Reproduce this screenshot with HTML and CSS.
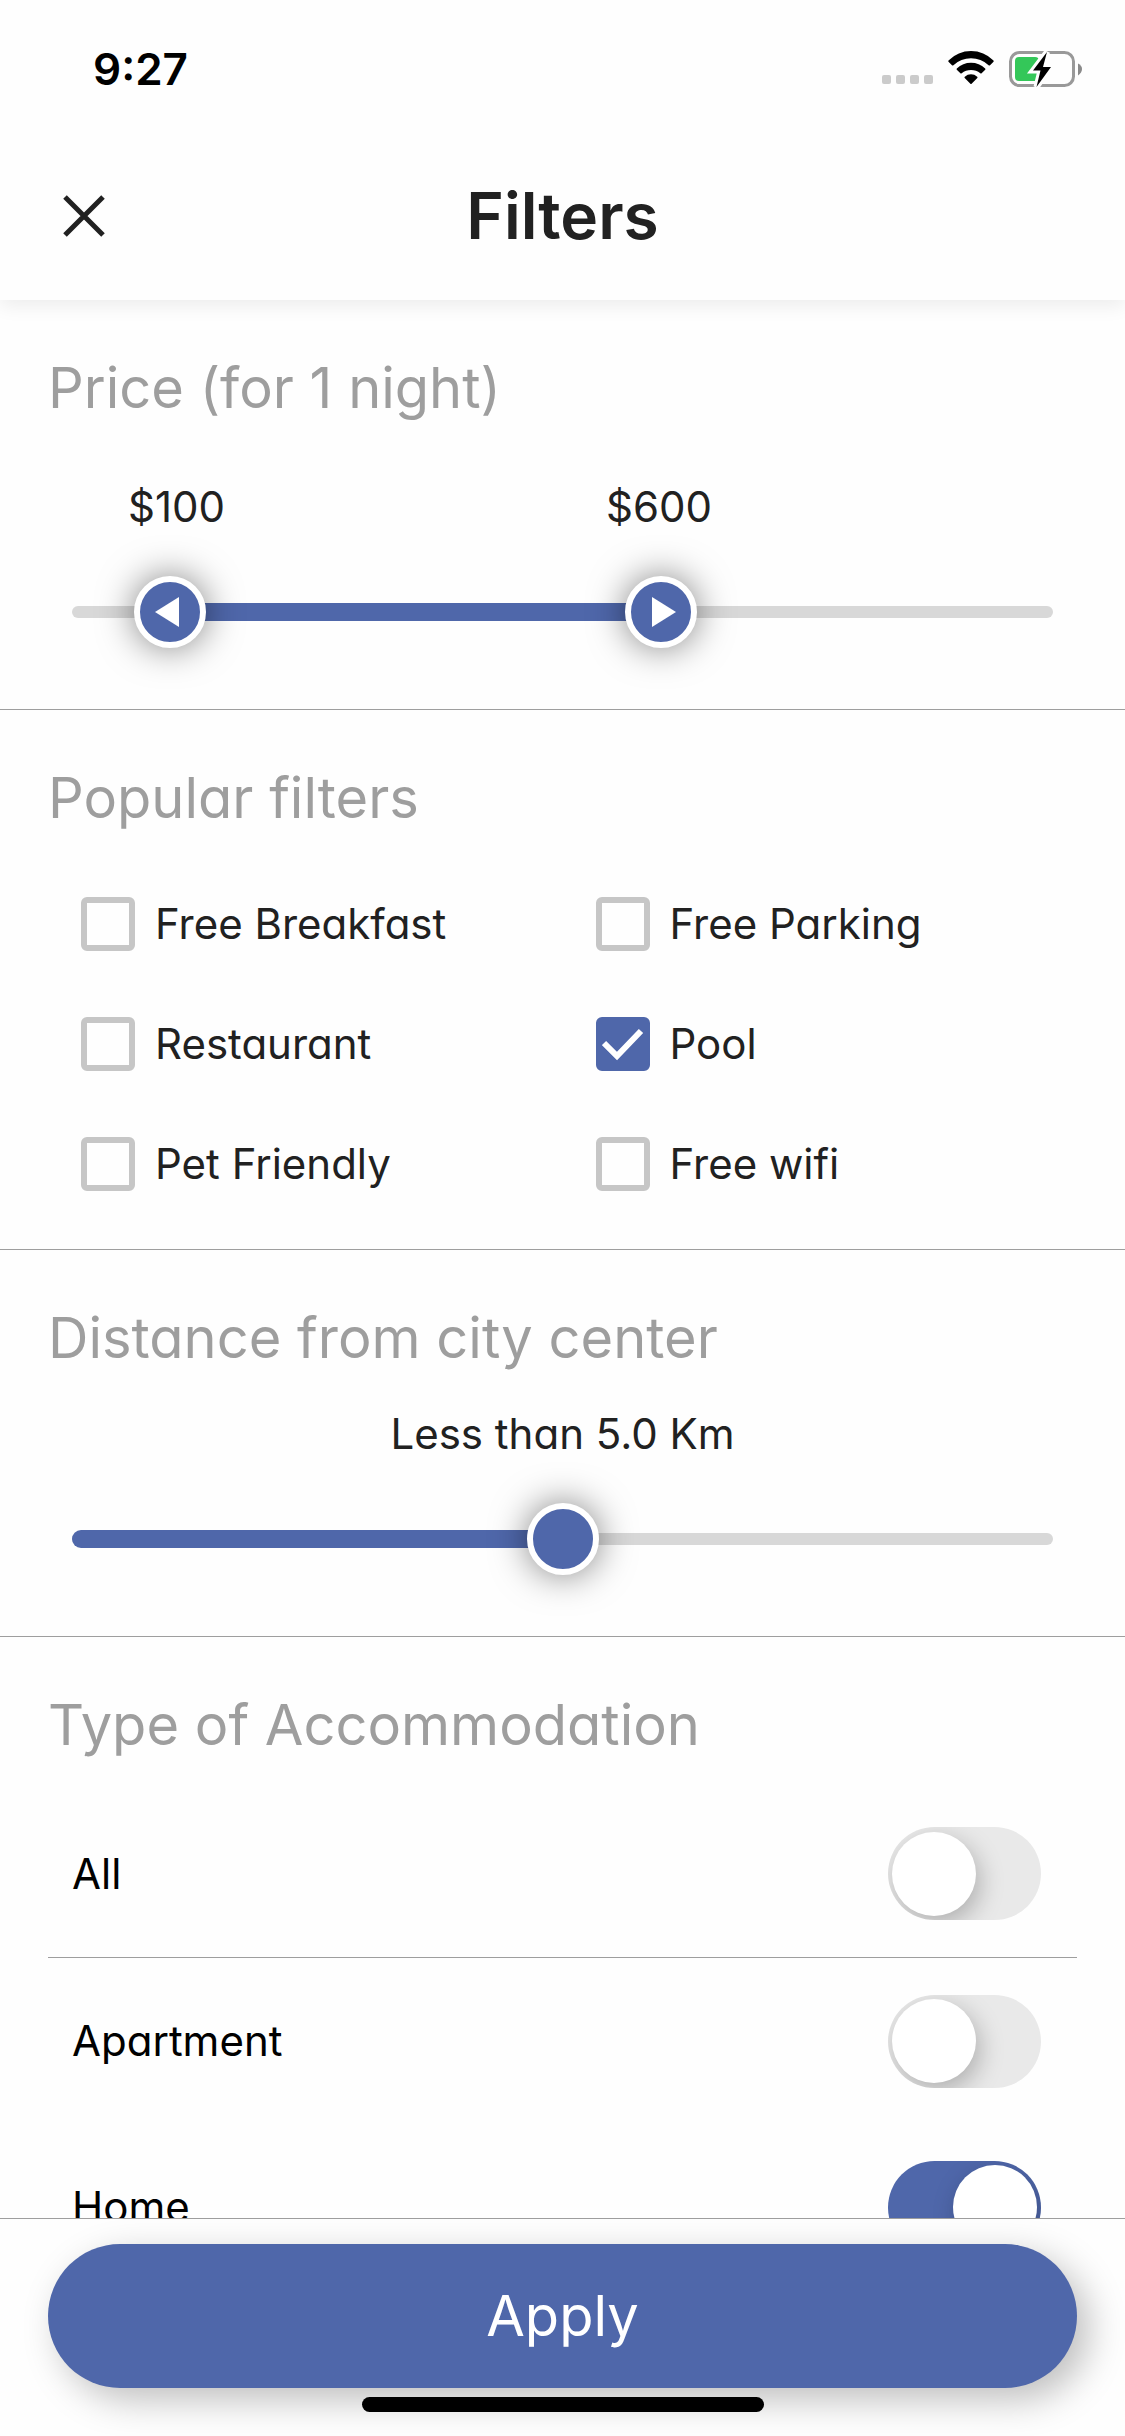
FILE: index.html
```html
<!DOCTYPE html>
<html lang="en">
<head>
    <meta charset="UTF-8">
    <meta name="viewport" content="width=device-width, initial-scale=1.0">
    <title>Filters</title>
    <link rel="stylesheet" href="styles.css">
</head>
<body>
    <header class="header">
        <div class="status-bar">
            <span class="time">9:27</span>
            <div class="status-icons">
                <svg class="signal" width="51" height="34" viewBox="0 0 51 34" fill="#cbcbcb">
                    <rect x="0" y="24" width="9" height="9" rx="2"/>
                    <rect x="14" y="24" width="9" height="9" rx="2"/>
                    <rect x="28" y="24" width="9" height="9" rx="2"/>
                    <rect x="42" y="24" width="9" height="9" rx="2"/>
                </svg>
                <svg class="wifi" width="46" height="34" viewBox="0 0 46 34">
                    <path d="M0.5 9.5Q10 0 23 0T45.5 9.5Q46 10.200 45.500 10.700L42 14.200Q41.300 14.700 40.600 14.200Q33 7.300 23 7.300T5.400 14.200Q4.700 14.700 4 14.200L0.500 10.700Q0 10.200 0.500 9.500Z"/>
                    <path d="M8.800 17.500Q14.800 11.800 23 11.800T37.200 17.500Q37.700 18.200 37.200 18.800L33.600 22.300Q33 22.800 32.300 22.300Q28.300 19 23 19T13.700 22.300Q13 22.800 12.400 22.300L8.800 18.800Q8.300 18.200 8.800 17.500Z"/>
                    <path d="M16.800 25.700Q19.500 23.300 23 23.300T29.200 25.700Q29.900 26.300 29.300 27L23.600 32.700Q23 33.300 22.400 32.700L16.700 27Q16.100 26.300 16.800 25.700Z"/>
                </svg>
                <svg class="battery" width="74" height="36" viewBox="0 0 74 36">
                    <rect x="1.500" y="1.500" width="63" height="33" rx="9" fill="none" stroke="#999" stroke-width="3"/>
                    <path d="M69 12.500Q73 14.500 73 18T69 24.500Z" fill="#8a8a8a"/>
                    <rect x="6" y="6" width="24" height="24" rx="4" fill="#34c759"/>
                    <path d="M38 1L24 19.500H31.500L27.500 36L42 16H34Z" fill="#000" stroke="#fefefe" stroke-width="6"/>
                    <path d="M38 1L24 19.500H31.500L27.500 36L42 16H34Z" fill="#000"/>
                </svg>
            </div>
        </div>
        <div class="app-bar">
            <button class="close" type="button" aria-label="Close">
                <svg width="42" height="42" viewBox="0 0 42 42" fill="none" stroke="#212121" stroke-width="5">
                    <path d="M2 2L40 40M40 2L2 40"/>
                </svg>
            </button>
            <h1>Filters</h1>
        </div>
    </header>

    <main class="content">
        <section class="section">
            <h2>Price (for 1 night)</h2>
            <div class="price-labels">
                <span style="flex-grow: 100"></span>
                <output class="price" for="price-min">$100</output>
                <span style="flex-grow: 500"></span>
                <output class="price" for="price-max">$600</output>
                <span style="flex-grow: 400"></span>
            </div>
            <div class="slider">
                <div class="track"></div>
                <div class="fill" style="left: 10%; right: 40%"></div>
                <input class="thumb-left" type="range" id="price-min" min="0" max="1000" value="100" aria-label="Minimum price">
                <input class="thumb-right" type="range" id="price-max" min="0" max="1000" value="600" aria-label="Maximum price">
            </div>
        </section>

        <section class="section popular">
            <h2>Popular filters</h2>
            <div class="options">
                <label class="option"><input type="checkbox">Free Breakfast</label>
                <label class="option"><input type="checkbox">Free Parking</label>
                <label class="option"><input type="checkbox">Restaurant</label>
                <label class="option"><input type="checkbox" checked>Pool</label>
                <label class="option"><input type="checkbox">Pet Friendly</label>
                <label class="option"><input type="checkbox">Free wifi</label>
            </div>
        </section>

        <section class="section">
            <h2>Distance from city center</h2>
            <label class="distance" for="distance">Less than 5.0 Km</label>
            <div class="slider">
                <div class="track"></div>
                <div class="fill" style="left: 0%; right: 50%"></div>
                <input type="range" id="distance" min="0" max="100" value="50">
            </div>
        </section>

        <section class="section">
            <h2>Type of Accommodation</h2>
            <div class="types">
                <label class="type type-all">All<input type="checkbox" role="switch"></label>
                <label class="type">Apartment<input type="checkbox" role="switch"></label>
                <label class="type">Home<input type="checkbox" role="switch" checked></label>
            </div>
        </section>
    </main>

    <footer class="footer">
        <button class="apply" type="button">Apply</button>
        <div class="home-indicator"></div>
    </footer>
</body>
</html>
```
FILE: styles.css
```css
* {
    box-sizing: border-box;
}
body {
    margin: 0;
    height: 100vh;
    display: flex;
    flex-direction: column;
    overflow: hidden;
    background-color: #fefefe;
    color: #212121;
    font-family: Inter, "Liberation Sans", sans-serif;
    font-feature-settings: "cv11";
    font-size: 42px;
    line-height: 60px;
}
h1, h2 {
    margin: 0;
    line-height: 80px;
}
button {
    font: inherit;
    font-feature-settings: inherit;
    border: none;
    padding: 0;
    cursor: pointer;
}
svg {
    display: block;
}
input {
    appearance: none;
    -webkit-appearance: none;
    margin: 0;
    flex: none;
}

/* header */
.header {
    position: relative;
    z-index: 1;
    flex: none;
    background-color: #fefefe;
    box-shadow: 0 6px 18px rgba(0, 0, 0, 0.07);
}
.status-bar {
    display: flex;
    justify-content: space-between;
    align-items: center;
    height: 132px;
    padding: 6px 42px 0 93px;
}
.time {
    color: #000;
    font-size: 44px;
    font-weight: 600;
}
.status-icons {
    display: flex;
    gap: 15px;
}
.app-bar {
    display: grid;
    grid-template-columns: 168px 1fr 168px;
    align-items: center;
    height: 168px;
}
.close {
    display: flex;
    align-items: center;
    justify-content: center;
    height: 168px;
    background: none;
}
h1 {
    text-align: center;
    font-size: 64px;
    font-weight: 600;
}

/* sections */
.content {
    flex: 1;
    min-height: 0;
    overflow: hidden;
}
.section {
    padding: 48px 48px 61px;
    border-bottom: 1px solid #9e9e9e;
}
.popular {
    padding-bottom: 25px;
}
h2 {
    color: #9e9e9e;
    font-size: 56px;
    font-weight: 400;
}

/* sliders */
.price-labels {
    display: flex;
    margin: 49px 32px 39px;
}
.price {
    display: flex;
    justify-content: center;
    width: 0;
}
.distance {
    display: block;
    margin: 26px 0 39px;
    text-align: center;
}
.slider {
    position: relative;
    height: 72px;
    margin: 0 24px;
}
.track {
    position: absolute;
    top: 30px;
    left: 0;
    right: 0;
    height: 12px;
    border-radius: 6px;
    background-color: #d8d8d8;
}
.fill {
    position: absolute;
    top: 27px;
    height: 18px;
    border-radius: 9px;
    background-color: #4f67aa;
}
.slider input {
    position: absolute;
    top: 0;
    left: -36px;
    width: calc(100% + 72px);
    height: 72px;
    background: none;
    pointer-events: none;
}
.slider input::-webkit-slider-thumb {
    -webkit-appearance: none;
    width: 72px;
    height: 72px;
    border: 6px solid #fff;
    border-radius: 50%;
    background: #4f67aa center no-repeat;
    box-shadow: 0 0 36px rgba(0, 0, 0, 0.5);
    pointer-events: auto;
}
.slider .thumb-left::-webkit-slider-thumb {
    background-image: url("data:image/svg+xml,%3Csvg xmlns='http://www.w3.org/2000/svg' width='30' height='30'%3E%3Cpath d='M0 15L24 0V30Z' fill='white'/%3E%3C/svg%3E");
}
.slider .thumb-right::-webkit-slider-thumb {
    background-image: url("data:image/svg+xml,%3Csvg xmlns='http://www.w3.org/2000/svg' width='30' height='30'%3E%3Cpath d='M30 15L6 0V30Z' fill='white'/%3E%3C/svg%3E");
}

/* popular filters */
.options {
    display: grid;
    grid-template-columns: 1fr 1fr;
    margin-top: 26px;
}
.option {
    display: flex;
    align-items: center;
    gap: 20px;
    height: 120px;
    padding-left: 33px;
}
.option input {
    width: 54px;
    height: 54px;
    border: 6px solid #c6c6c6;
    border-radius: 6px;
}
.option input:checked {
    border-color: #4f67aa;
    background: #4f67aa url("data:image/svg+xml,%3Csvg xmlns='http://www.w3.org/2000/svg' width='42' height='42'%3E%3Cpath d='M2 20L15 33L39 8' fill='none' stroke='white' stroke-width='6'/%3E%3C/svg%3E") center no-repeat;
}

/* accommodation */
.types {
    margin-top: 25px;
    color: #000;
}
.type {
    display: flex;
    align-items: center;
    justify-content: space-between;
    height: 166px;
    padding: 0 36px 0 24px;
}
.type-all {
    height: 168px;
    border-bottom: 1px solid #9e9e9e;
}
.type input {
    display: flex;
    align-items: center;
    width: 153px;
    height: 93px;
    padding: 0 4px;
    border-radius: 47px;
    background-color: #e9e9e9;
    overflow: hidden;
}
.type input::before {
    content: "";
    width: 84px;
    height: 84px;
    border-radius: 50%;
    background-color: #fff;
    box-shadow: 4px 8px 24px rgba(0, 0, 0, 0.25);
}
.type input:checked {
    justify-content: flex-end;
    background-color: #4f67aa;
}

/* footer */
.footer {
    flex: none;
    display: flex;
    flex-direction: column;
    align-items: center;
    gap: 9px;
    padding: 25px 48px 24px;
    border-top: 1px solid #9e9e9e;
}
.apply {
    width: 100%;
    height: 144px;
    border-radius: 72px;
    background-color: #4f67aa;
    color: #fff;
    font-size: 56px;
    font-weight: 400;
    box-shadow: 12px 12px 36px rgba(0, 0, 0, 0.25);
}
.home-indicator {
    position: relative;
    width: 402px;
    height: 15px;
    border-radius: 8px;
    background-color: #000;
}
```
